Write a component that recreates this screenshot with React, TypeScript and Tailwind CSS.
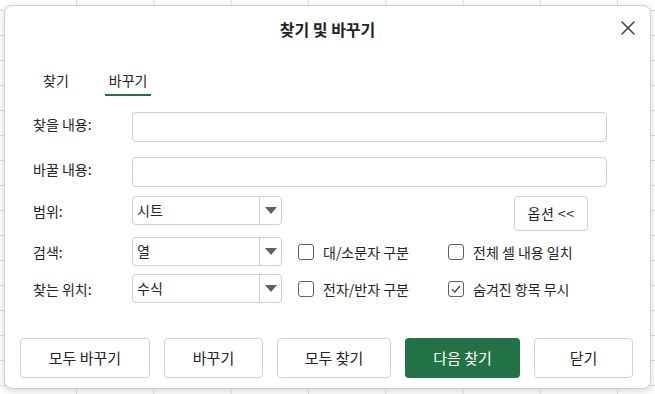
import { X } from "lucide-react";

const labelCls = "w-[99px] shrink-0 text-[14px] leading-[20px] text-[#242424]";

function Select({ value }: { value: string }) {
  return (
    <div className="flex h-full w-[150px] rounded-[4px] border border-[#cfcfcf] bg-white">
      <div className="flex flex-1 items-center pl-[4px] text-[14px] text-[#242424]">{value}</div>
      <div className="flex w-[22px] items-center justify-center border-l border-[#cfcfcf]">
        <svg width="12" height="7" viewBox="0 0 12 7">
          <polygon points="0,0 12,0 6,7" fill="#616161" />
        </svg>
      </div>
    </div>
  );
}

function Check({ label, checked = false }: { label: string; checked?: boolean }) {
  return (
    <div className="flex w-[150px] items-center gap-[9px]">
      <div className="flex h-[16px] w-[16px] items-center justify-center rounded-[3px] border border-[#616161] bg-white">
        {checked && (
          <svg width="12" height="12" viewBox="0 0 12 12">
            <polyline points="2,6.2 4.8,9 10,3" fill="none" stroke="#424242" strokeWidth="1.2" />
          </svg>
        )}
      </div>
      <span className="text-[14px] leading-[20px] text-[#242424]">{label}</span>
    </div>
  );
}

function Btn({ text, w, primary = false }: { text: string; w: string; primary?: boolean }) {
  return (
    <button
      className={
        primary
          ? `${w} h-[40px] rounded-[4px] bg-[#217346] text-[15px] text-white`
          : `${w} h-[40px] rounded-[4px] border border-[#d1d1d1] bg-white text-[15px] text-[#242424]`
      }
    >
      {text}
    </button>
  );
}

export default function App() {
  return (
    <div className="h-[394px] w-[655px] overflow-hidden bg-white bg-[linear-gradient(to_right,#dcdcdc_1px,transparent_1px),linear-gradient(to_bottom,#dcdcdc_1px,transparent_1px)] bg-[size:77.3px_25px] bg-[position:-1.3px_10px] pl-[4px] pt-[5px] font-['Noto_Sans_CJK_KR',sans-serif]">
      <div className="relative flex h-[384px] w-[647px] flex-col rounded-[8px] border border-[#d0d0d0] bg-white shadow-[0_2px_8px_rgba(0,0,0,0.16)]">
        <div className="flex h-[46px] items-center justify-center">
          <h1 className="text-[16px] font-bold text-[#242424]">찾기 및 바꾸기</h1>
        </div>
        <button className="absolute right-[10px] top-[10px] text-[#424242]">
          <X className="h-[24px] w-[24px]" strokeWidth={1.6} />
        </button>

        <div className="mt-[16px] flex gap-[32px] pl-[34px]">
          <div className="border-b-2 border-transparent px-[4px] pb-[4px] pt-[2px] text-[14px] leading-[20px] text-[#242424]">찾기</div>
          <div className="border-b-2 border-[#217346] px-[4px] pb-[4px] pt-[2px] text-[14px] leading-[20px] text-[#242424]">바꾸기</div>
        </div>

        <div className="flex flex-col pl-[28px]">
          <div className="mt-[16px] flex h-[30px] items-center">
            <span className={`${labelCls} mb-[6px]`}>찾을 내용:</span>
            <div className="h-full w-[475px] rounded-[4px] border border-[#cfcfcf]" />
          </div>
          <div className="mt-[15px] flex h-[30px] items-center">
            <span className={`${labelCls} mb-[6px]`}>바꿀 내용:</span>
            <div className="h-full w-[475px] rounded-[4px] border border-[#cfcfcf]" />
          </div>
          <div className="mt-[9px] flex h-[29px] items-start">
            <span className={`${labelCls} self-center`}>범위:</span>
            <Select value="시트" />
            <button className="ml-[232px] h-[35px] w-[74px] rounded-[4px] border border-[#d1d1d1] bg-white text-[14px] tracking-[0.5px] text-[#242424]">
              옵션 &lt;&lt;
            </button>
          </div>
          <div className="mt-[12px] flex h-[29px] items-center">
            <span className={labelCls}>검색:</span>
            <Select value="열" />
            <div className="ml-[16px] flex">
              <Check label="대/소문자 구분" />
              <Check label="전체 셀 내용 일치" />
            </div>
          </div>
          <div className="mt-[8px] flex h-[29px] items-center">
            <span className={labelCls}>찾는 위치:</span>
            <Select value="수식" />
            <div className="ml-[16px] flex">
              <Check label="전자/반자 구분" />
              <Check label="숨겨진 항목 무시" checked />
            </div>
          </div>
        </div>

        <div className="mt-auto flex gap-[14px] pb-[10px] pl-[15px]">
          <Btn text="모두 바꾸기" w="w-[130px]" />
          <Btn text="바꾸기" w="w-[99px]" />
          <Btn text="모두 찾기" w="w-[114px]" />
          <Btn text="다음 찾기" w="w-[115px]" primary />
          <Btn text="닫기" w="w-[99px]" />
        </div>
      </div>
    </div>
  );
}
